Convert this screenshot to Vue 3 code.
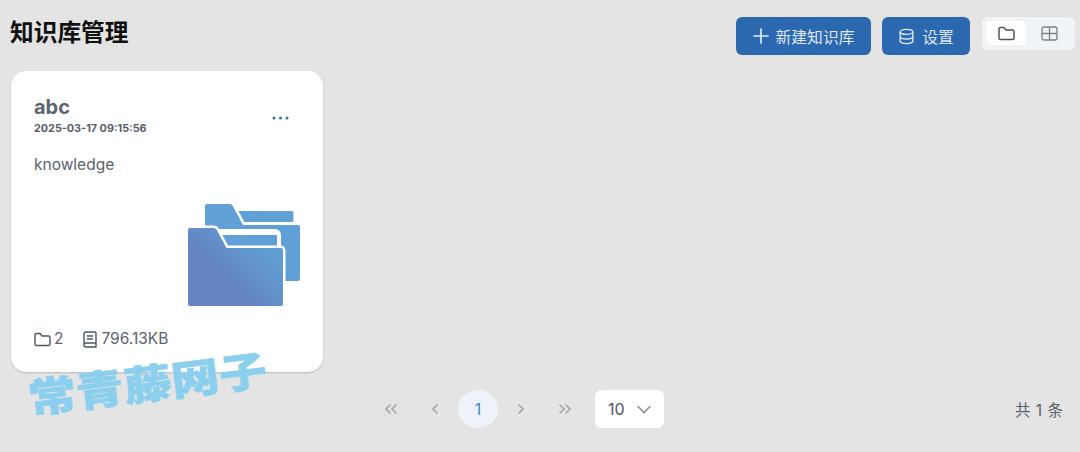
<script setup>
import { ref } from "vue";

const viewMode = ref("folder");
const pages = ref([1]);
const card = {
  name: "abc",
  time: "2025-03-17 09:15:56",
  desc: "knowledge",
  count: 2,
  size: "796.13KB",
};
</script>

<template>
  <div class="page">
    <header class="top">
      <h1 class="title">知识库管理</h1>
      <div class="actions">
        <button class="btn btn-new">
          <svg width="16" height="16" viewBox="0 0 16 16" fill="none" stroke="currentColor" stroke-width="1.700" stroke-linecap="round"><path d="M8 1v14M1 8h14" /></svg>
          <span>新建知识库</span>
        </button>
        <button class="btn btn-set">
          <svg width="17" height="17" viewBox="0 0 24 24" fill="none" stroke="currentColor" stroke-width="1.900"><ellipse cx="12" cy="5.500" rx="9" ry="3.500" /><path d="M3 5.500v13c0 1.900 4 3.500 9 3.500s9-1.600 9-3.500v-13M3 12c0 1.900 4 3.500 9 3.500s9-1.600 9-3.500" /></svg>
          <span>设置</span>
        </button>
        <div class="toggle">
          <div class="tab" :class="{ on: viewMode === 'folder' }">
            <svg width="17" height="15" viewBox="0 0 17 15" fill="none" stroke="#4b5563" stroke-width="1.500" stroke-linejoin="round"><path d="M1 3a1.500 1.500 0 0 1 1.500-1.500H6L8 4h6.500A1.500 1.500 0 0 1 16 5.500V12a1.500 1.500 0 0 1-1.500 1.500h-12A1.500 1.500 0 0 1 1 12z" /></svg>
          </div>
          <div class="tab" :class="{ on: viewMode === 'grid' }">
            <svg width="17" height="15" viewBox="0 0 17 15" fill="none" stroke="#7b8087" stroke-width="1.300"><rect x="1" y="1" width="15" height="13" rx="2" /><path d="M1 7.500h15M8.500 1v13" /></svg>
          </div>
        </div>
      </div>
    </header>

    <div class="list">
      <div class="card">
        <div class="card-head">
          <div>
            <div class="name">{{ card.name }}</div>
            <div class="time">{{ card.time }}</div>
          </div>
          <svg class="more" width="17" height="4" viewBox="0 0 17 4" fill="#2f6fb8"><circle cx="2" cy="2" r="1.500" /><circle cx="8.500" cy="2" r="1.500" /><circle cx="15" cy="2" r="1.500" /></svg>
        </div>
        <p class="desc">{{ card.desc }}</p>
        <div class="art">
          <svg width="112" height="102" viewBox="0 0 112 102">
            <defs>
              <linearGradient id="fold" x1="0.1" y1="0.8" x2="0.95" y2="0.1">
                <stop offset="0.3" stop-color="#6585c1" />
                <stop offset="0.85" stop-color="#5f9fd5" />
              </linearGradient>
            </defs>
            <!-- back folder -->
            <path fill="#60a0d6" d="M50 7h54a1.500 1.500 0 0 1 1.500 1.500v8a1.500 1.500 0 0 1-1.500 1.500H56z" />
            <path fill="#60a0d6" stroke="#fff" stroke-width="5" paint-order="stroke" d="M17 2a2 2 0 0 1 2-2h23a3 3 0 0 1 2.500 1.500L55 21h55a2 2 0 0 1 2 2v52a2 2 0 0 1-2 2H19a2 2 0 0 1-2-2z" />
            <!-- gap behind front folder -->
            <path fill="#fff" d="M24 25h63a6 6 0 0 1 6 6v18H36z" />
            <path fill="#60a0d6" d="M33 31h56v11H39z" />
            <!-- front folder -->
            <path fill="url(#fold)" stroke="#fff" stroke-width="5" paint-order="stroke" d="M0 26a2 2 0 0 1 2-2h24a3 3 0 0 1 2.500 1.500L38.500 44H93a2 2 0 0 1 2 2v54a2 2 0 0 1-2 2H2a2 2 0 0 1-2-2z" />
          </svg>
        </div>
        <div class="foot">
          <span class="meta">
            <svg width="17" height="15" viewBox="0 0 17 15" fill="none" stroke="#4b5563" stroke-width="1.400" stroke-linejoin="round"><path d="M1 3a1.500 1.500 0 0 1 1.500-1.500H6L8 4h6.500A1.500 1.500 0 0 1 16 5.500V12a1.500 1.500 0 0 1-1.500 1.500h-12A1.500 1.500 0 0 1 1 12z" /></svg>
            {{ card.count }}
          </span>
          <span class="meta">
            <svg width="16" height="17" viewBox="0 0 16 17" fill="none" stroke="#4b5563" stroke-width="1.400" stroke-linejoin="round"><path d="M2 13V3a2 2 0 0 1 2-2h9a1 1 0 0 1 1 1v14H4a2 2 0 0 1-2-2.500 2 2 0 0 1 2-1.500h10M5 5h6M5 8h6" /></svg>
            {{ card.size }}
          </span>
        </div>
      </div>
    </div>

    <footer class="pager">
      <div class="pager-main">
        <span class="arrow">
          <svg width="14" height="12" viewBox="0 0 14 12" fill="none" stroke="#a3a6ab" stroke-width="1.700"><path d="M6.500 1.500 2 6l4.500 4.500M12.500 1.500 8 6l4.500 4.500" /></svg>
        </span>
        <span class="arrow">
          <svg width="8" height="12" viewBox="0 0 8 12" fill="none" stroke="#a3a6ab" stroke-width="1.700"><path d="M6.500 1.500 2 6l4.500 4.500" /></svg>
        </span>
        <span v-for="p in pages" :key="p" class="num">{{ p }}</span>
        <span class="arrow">
          <svg width="8" height="12" viewBox="0 0 8 12" fill="none" stroke="#a3a6ab" stroke-width="1.700"><path d="M1.500 1.500 6 6l-4.500 4.500" /></svg>
        </span>
        <span class="arrow">
          <svg width="14" height="12" viewBox="0 0 14 12" fill="none" stroke="#a3a6ab" stroke-width="1.700"><path d="M1.500 1.500 6 6l-4.500 4.500M7.500 1.500 12 6l-4.500 4.500" /></svg>
        </span>
        <div class="size">
          <span>10</span>
          <svg width="16" height="9" viewBox="0 0 16 9" fill="none" stroke="#8b8f95" stroke-width="1.600"><path d="M1.500 1 8 7.500 14.500 1" /></svg>
        </div>
      </div>
      <div class="total">共 1 条</div>
    </footer>

    <div class="mark">常青藤网子</div>
  </div>
</template>

<style>
html,
body {
  margin: 0;
  background: #e4e4e4;
}
</style>

<style scoped>
.page {
  position: relative;
  width: 1080px;
  height: 452px;
  overflow: hidden;
  box-sizing: border-box;
  padding: 16px 5px 0 10px;
  background: #e4e4e4;
  font-family: Inter, "Noto Sans CJK SC", sans-serif;
  color: #4b5563;
}
.top {
  display: flex;
  justify-content: space-between;
  align-items: flex-start;
  height: 55px;
}
.title {
  margin: 0;
  font-size: 23.700px;
  line-height: 31px;
  font-weight: 700;
  color: #111;
  font-family: "Noto Sans CJK SC", sans-serif;
}
.actions {
  display: flex;
  align-items: flex-start;
  padding-top: 1px;
}
.btn {
  display: flex;
  align-items: center;
  justify-content: center;
  height: 38px;
  border: none;
  border-radius: 6px;
  background: #2c68af;
  color: #dfe8f2;
  font-size: 15.800px;
  font-family: "Noto Sans CJK SC", sans-serif;
  padding: 0;
}
.btn-new {
  width: 135px;
  gap: 7px;
  margin-right: 11px;
}
.btn-set {
  width: 88px;
  gap: 7px;
  margin-right: 12px;
}
.toggle {
  display: flex;
  box-sizing: border-box;
  width: 93px;
  height: 33px;
  padding: 4px;
  gap: 3px;
  border-radius: 6px;
  background: #f0f3f8;
}
.tab {
  display: flex;
  align-items: center;
  justify-content: center;
  width: 40px;
  height: 24px;
  border-radius: 5px;
}
.tab.on {
  background: #fff;
}
.list {
  display: flex;
  padding-left: 1px;
}
.card {
  box-sizing: border-box;
  width: 312px;
  height: 301px;
  padding: 24px 23px 0;
  border-radius: 15px;
  background: #fff;
  box-shadow: 0 1px 2px rgba(0, 0, 0, 0.2);
}
.card-head {
  display: flex;
  justify-content: space-between;
  align-items: center;
  padding-right: 11px;
}
.name {
  font-family: Inter, sans-serif;
  font-size: 20px;
  line-height: 24px;
  font-weight: 700;
  color: #5b6472;
}
.time {
  font-size: 10.800px;
  line-height: 14px;
  margin-top: 3px;
  font-weight: 700;
  color: #565d69;
}
.more {
  margin-top: 4px;
}
.desc {
  margin: 19px 0 0;
  font-size: 15.500px;
  line-height: 19px;
  color: #5a6270;
}
.art {
  display: flex;
  justify-content: flex-end;
  margin: 30px 0 0;
  height: 102px;
}
.foot {
  display: flex;
  gap: 19px;
  margin-top: 24px;
}
.meta {
  display: flex;
  align-items: center;
  gap: 3px;
  font-size: 15.500px;
  line-height: 18px;
  color: #5a6270;
}
.pager {
  display: flex;
  justify-content: flex-end;
  align-items: center;
  position: relative;
  height: 38px;
  margin-top: 18px;
  padding-right: 12px;
}
.pager-main {
  position: absolute;
  left: 368px;
  top: 0;
  display: flex;
  align-items: center;
  height: 38px;
}
.arrow {
  display: flex;
  justify-content: center;
  width: 26px;
  margin-right: 18px;
}
.arrow:nth-child(2) {
  margin-right: 10px;
}
.arrow:nth-child(4) {
  margin-left: 10px;
}
.arrow:nth-child(5) {
  margin-right: 17px;
}
.num {
  display: flex;
  align-items: center;
  justify-content: center;
  width: 40px;
  height: 38px;
  border-radius: 50%;
  background: #eff3f9;
  color: #3f88cc;
  font-size: 16px;
}
.size {
  display: flex;
  align-items: center;
  justify-content: space-between;
  box-sizing: border-box;
  width: 69px;
  height: 38px;
  padding: 0 12px 0 13px;
  border-radius: 6px;
  background: #fff;
  font-size: 16px;
  color: #4b5563;
}
.total {
  font-size: 15.500px;
  word-spacing: 1px;
  color: #5a6270;
  font-family: Inter, "Noto Sans CJK SC", sans-serif;
}
.mark {
  position: absolute;
  left: 28px;
  top: 369px;
  font-family: "Noto Sans CJK SC", sans-serif;
  font-size: 48px;
  line-height: 54px;
  font-weight: 900;
  -webkit-text-stroke: 0.6px #8bcfee;
  color: #8bcfee;
  transform: rotate(-7deg) scaleY(0.85);
  transform-origin: left center;
  white-space: nowrap;
}
</style>
